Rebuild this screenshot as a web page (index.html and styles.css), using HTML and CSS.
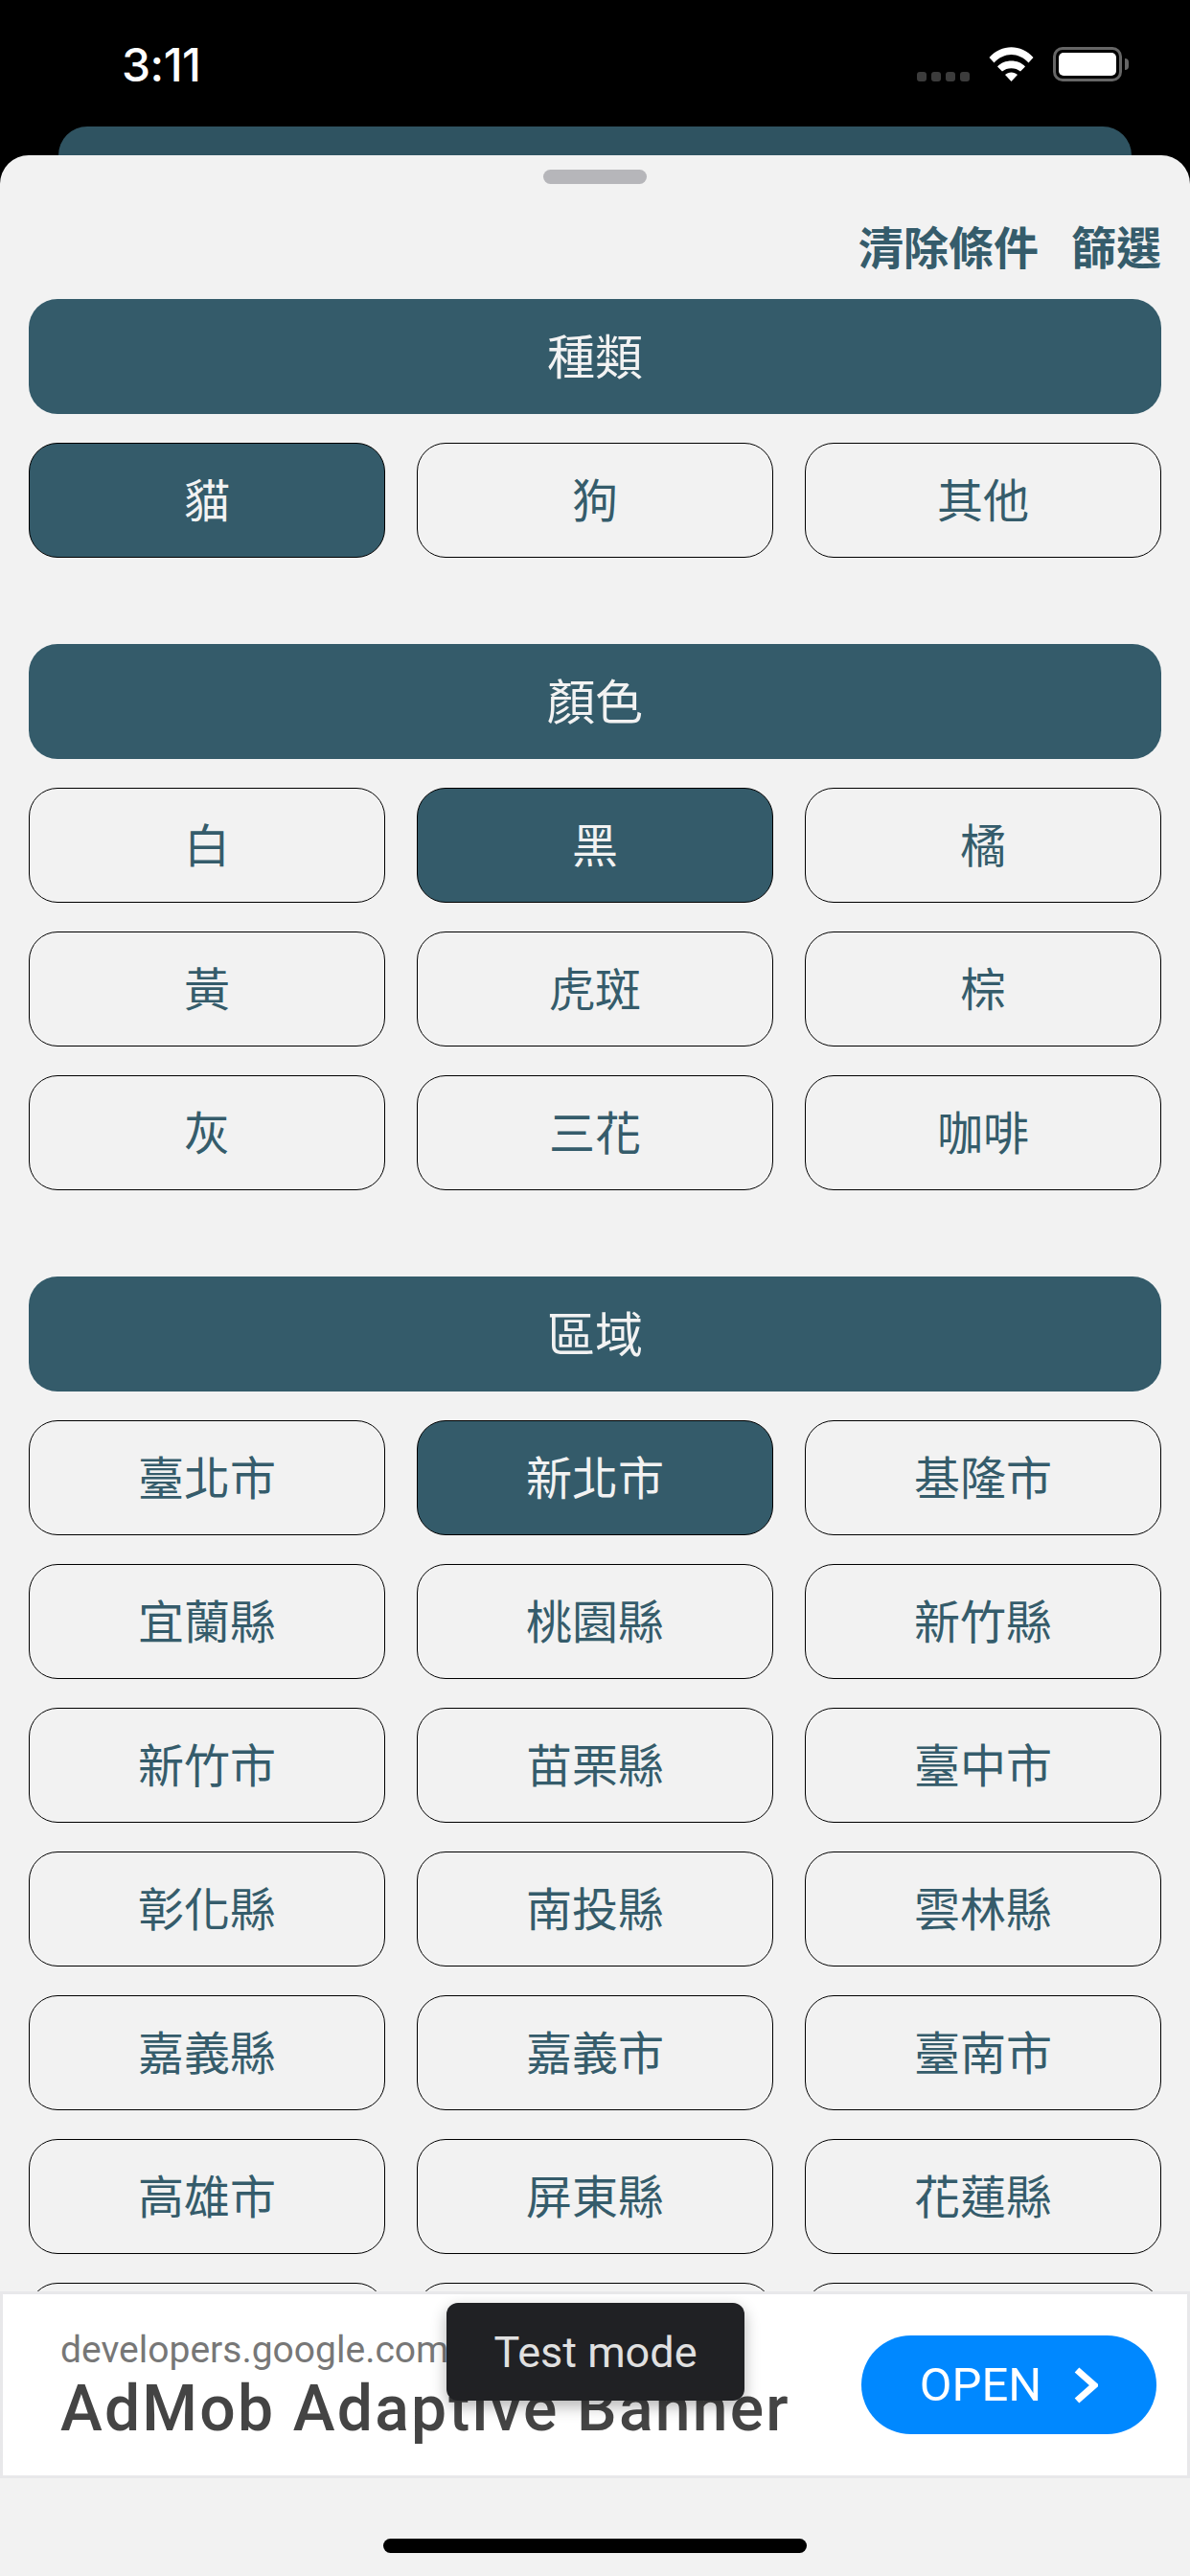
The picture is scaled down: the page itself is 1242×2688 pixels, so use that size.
FILE: index.html
```html
<!DOCTYPE html>
<html lang="zh-Hant">
  <head>
    <meta charset="utf-8" />
    <title>篩選</title>
    <link rel="stylesheet" href="styles.css">
  </head>
  <body>
    <div class="status-bar">
      <span class="time">3:11</span>
      <div class="status-icons">
        <div class="signal"><i></i><i></i><i></i><i></i></div>
        <svg class="wifi" width="47" height="36" viewBox="0 0 47 36">
          <path d="M0.5 11 C13 -3.5 34 -3.5 46.5 11 L41.5 16.5 C31 5 16 5 5.5 16.5 Z" />
          <path d="M9 20.5 C16 12.5 31 12.5 38 20.5 L33 25.5 C28 21 19 21 14 25.5 Z" />
          <path d="M17 29 C20.5 25.5 26.5 25.5 30 29 L23.5 36 Z" />
        </svg>
        <div class="battery"><div class="battery-level"></div></div>
        <div class="battery-nub"></div>
      </div>
    </div>
    <div class="back-card"></div>

    <div class="sheet">
      <div class="handle"></div>
      <div class="toolbar">
        <span>清除條件</span>
        <span>篩選</span>
      </div>

      <div class="filters">
        <section class="group">
          <h2 class="group-title">種類</h2>
          <div class="options">
            <button class="option selected">貓</button>
            <button class="option">狗</button>
            <button class="option">其他</button>
          </div>
        </section>

        <section class="group">
          <h2 class="group-title">顏色</h2>
          <div class="options">
            <button class="option">白</button>
            <button class="option selected">黑</button>
            <button class="option">橘</button>
            <button class="option">黃</button>
            <button class="option">虎斑</button>
            <button class="option">棕</button>
            <button class="option">灰</button>
            <button class="option">三花</button>
            <button class="option">咖啡</button>
          </div>
        </section>

        <section class="group">
          <h2 class="group-title">區域</h2>
          <div class="options">
            <button class="option">臺北市</button>
            <button class="option selected">新北市</button>
            <button class="option">基隆市</button>
            <button class="option">宜蘭縣</button>
            <button class="option">桃園縣</button>
            <button class="option">新竹縣</button>
            <button class="option">新竹市</button>
            <button class="option">苗栗縣</button>
            <button class="option">臺中市</button>
            <button class="option">彰化縣</button>
            <button class="option">南投縣</button>
            <button class="option">雲林縣</button>
            <button class="option">嘉義縣</button>
            <button class="option">嘉義市</button>
            <button class="option">臺南市</button>
            <button class="option">高雄市</button>
            <button class="option">屏東縣</button>
            <button class="option">花蓮縣</button>
            <button class="option"></button>
            <button class="option"></button>
            <button class="option"></button>
          </div>
        </section>
      </div>

      <div class="ad">
        <div class="ad-text">
          <div class="ad-url">developers.google.com</div>
          <div class="ad-title">AdMob Adaptive Banner</div>
        </div>
        <div class="ad-open">
          <span>OPEN</span>
          <svg class="chevron" width="25" height="38" viewBox="0 0 25 38">
            <path d="M3 3 L21 19 L3 35" />
          </svg>
        </div>
        <div class="test-mode">Test mode</div>
      </div>

      <div class="home-area">
        <div class="home-bar"></div>
      </div>
    </div>
  </body>
</html>
```

FILE: styles.css
```css
html,
body {
  margin: 0;
  padding: 0;
}
body {
  width: 1242px;
  height: 2688px;
  overflow: hidden;
  background: #000;
  display: flex;
  flex-direction: column;
  font-family: "Noto Sans CJK TC", "Noto Sans", sans-serif;
}

.status-bar {
  height: 132px;
  flex: none;
  box-sizing: border-box;
  padding: 39px 64px 0 127px;
  display: flex;
  justify-content: space-between;
  align-items: flex-start;
  color: #fff;
}
.time {
  font-family: Inter, sans-serif;
  font-size: 48px;
  font-weight: 500;
  line-height: 57px;
  letter-spacing: -0.5px;
}
.status-icons {
  display: flex;
  align-items: flex-end;
  margin-top: 10px;
  height: 36px;
}
.signal {
  display: flex;
  gap: 5px;
  margin-right: 20px;
}
.signal i {
  display: block;
  width: 10px;
  height: 10px;
  border-radius: 3px;
  background: #3c3c3c;
}
.wifi {
  display: block;
  fill: #fff;
  margin-right: 20px;
}
.battery {
  width: 72px;
  height: 36px;
  box-sizing: border-box;
  border: 3px solid #666;
  border-radius: 10px;
  padding: 3px;
}
.battery-level {
  height: 100%;
  background: #fff;
  border-radius: 5px;
}
.battery-nub {
  width: 4px;
  height: 12px;
  margin: 0 0 12px 3px;
  background: #666;
  border-radius: 0 6px 6px 0;
}

.back-card {
  height: 30px;
  flex: none;
  margin: 0 61px;
  background: #2f5361;
  border-radius: 30px 30px 0 0;
}

.sheet {
  flex: 1;
  min-height: 0;
  display: flex;
  flex-direction: column;
  background: #f2f2f2;
  border-radius: 30px 30px 0 0;
}
.handle {
  flex: none;
  width: 108px;
  height: 15px;
  margin: 15px auto 0;
  background: #b6b6ba;
  border-radius: 8px;
}
.toolbar {
  flex: none;
  height: 120px;
  box-sizing: border-box;
  padding: 7px 30px 0 0;
  display: flex;
  justify-content: flex-end;
  align-items: center;
  gap: 34px;
  color: #355c6b;
  font-size: 47px;
  font-weight: 700;
}

.filters {
  flex: 1;
  min-height: 0;
  overflow: hidden;
  padding: 0 30px;
}
.group {
  margin-bottom: 90px;
}
.group-title {
  margin: 0 0 30px;
  height: 120px;
  background: #345b6a;
  color: #f2f2f2;
  border-radius: 30px;
  font-size: 50px;
  font-weight: 400;
  line-height: 114px;
  text-align: center;
}
.options {
  display: grid;
  grid-template-columns: repeat(3, 372px);
  gap: 30px 33px;
}
.option {
  height: 120px;
  padding: 0 0 6px;
  background: transparent;
  border: 1px solid #000;
  border-radius: 30px;
  color: #355c6b;
  font-family: inherit;
  font-size: 48px;
  font-weight: 400;
}
.option.selected {
  background: #345b6a;
  color: #f2f2f2;
}

.ad {
  position: relative;
  flex: none;
  height: 195px;
  box-sizing: border-box;
  padding: 0 32px 0 60px;
  display: flex;
  justify-content: space-between;
  align-items: center;
  background: #fff;
  border: 3px solid #e8e8ea;
}
.ad-text {
  margin-top: 5px;
}
.ad-url {
  font-family: Roboto, sans-serif;
  font-size: 39px;
  line-height: 46px;
  color: #777;
}
.ad-title {
  font-family: Roboto, sans-serif;
  font-size: 66px;
  font-weight: 500;
  line-height: 78px;
  letter-spacing: 2.2px;
  color: #444;
}
.ad-open {
  width: 308px;
  height: 103px;
  display: flex;
  justify-content: center;
  align-items: center;
  gap: 34px;
  background: #0088ff;
  border-radius: 52px;
  color: #fff;
  font-family: Roboto, sans-serif;
  font-size: 49px;
  font-weight: 400;
}
.chevron {
  display: block;
  fill: none;
  stroke: #fff;
  stroke-width: 7;
}
.test-mode {
  position: absolute;
  top: 9px;
  left: 463px;
  width: 311px;
  height: 102px;
  display: flex;
  justify-content: center;
  align-items: center;
  background: #202124;
  border-radius: 12px;
  box-shadow: 0 6px 16px rgba(0, 0, 0, 0.3);
  color: #e0e0e0;
  font-family: Roboto, sans-serif;
  font-size: 45px;
}

.home-area {
  flex: none;
  height: 102px;
  box-sizing: border-box;
  padding-top: 63px;
}
.home-bar {
  width: 442px;
  height: 15px;
  margin: 0 auto;
  background: #000;
  border-radius: 8px;
}
```
